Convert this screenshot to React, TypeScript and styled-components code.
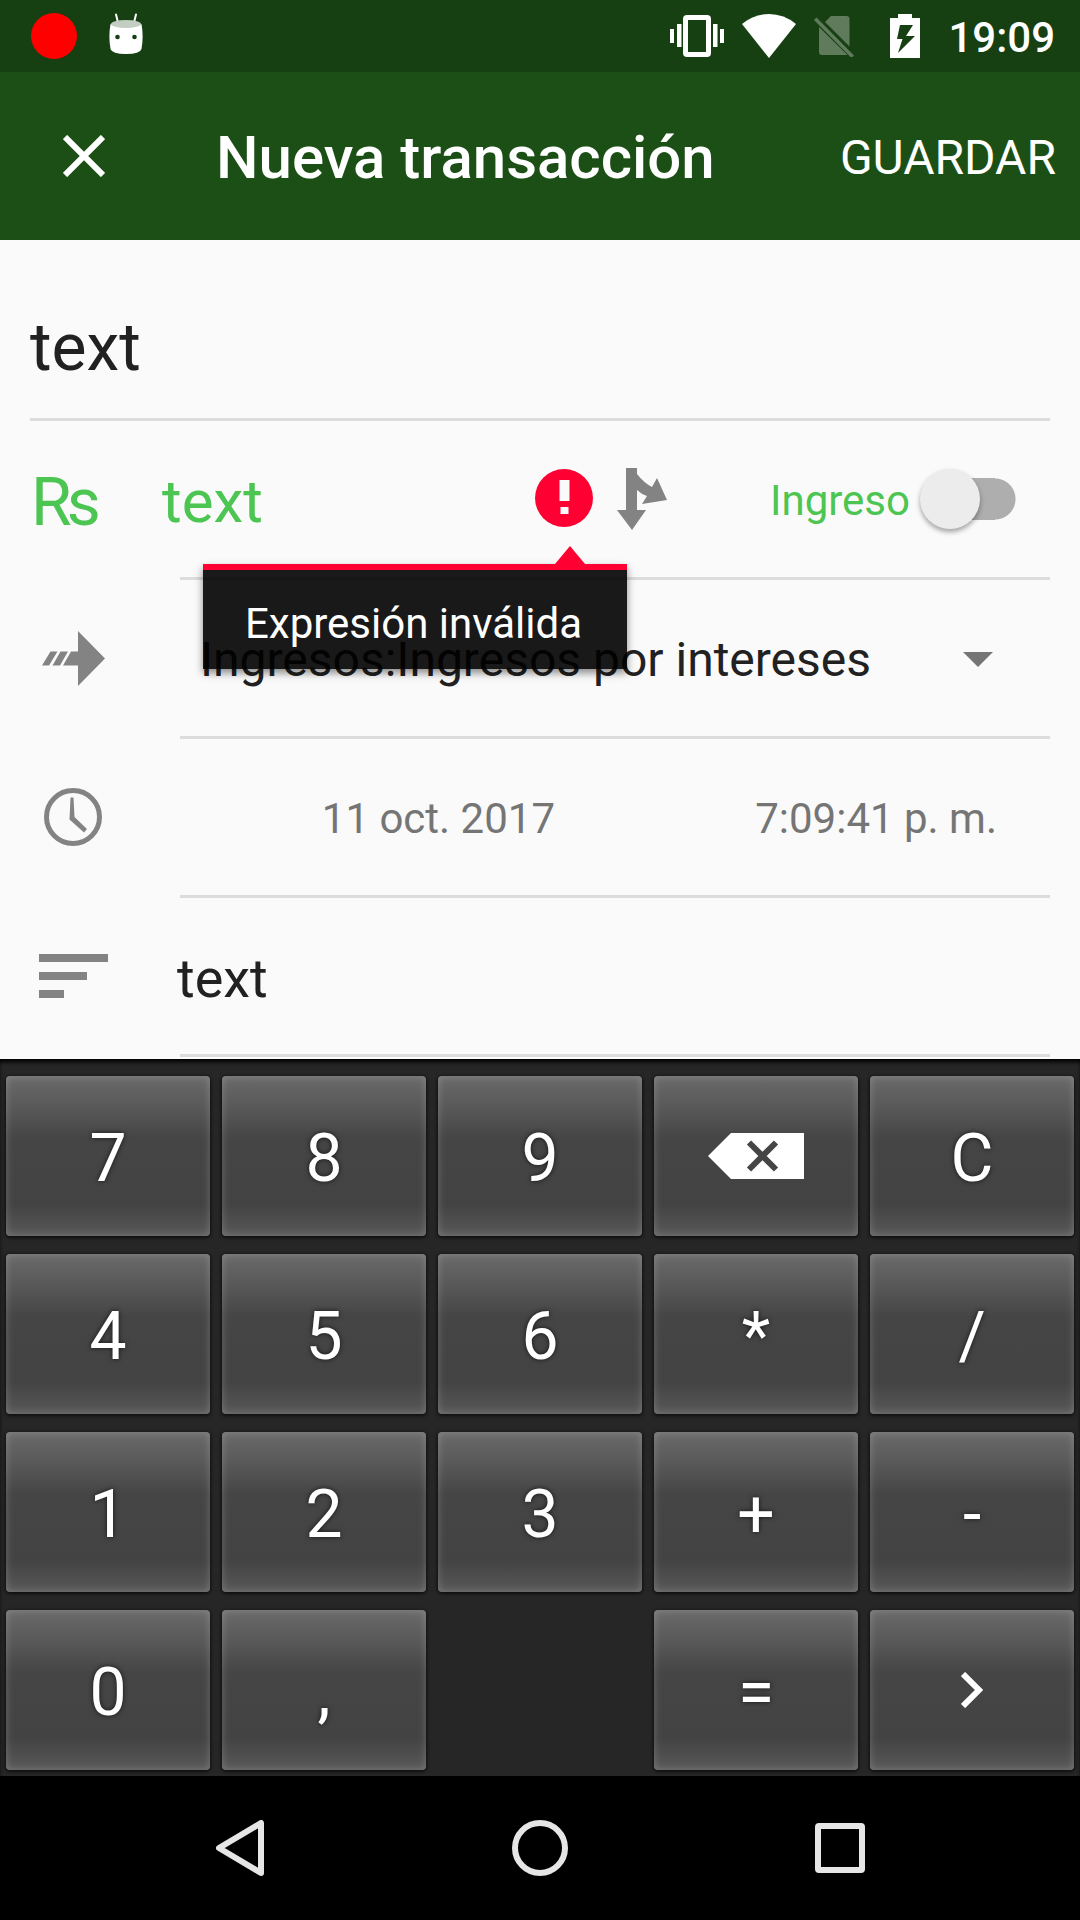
import React from 'react';
import styled, { createGlobalStyle } from 'styled-components';

const GlobalStyle = createGlobalStyle`
  *, *::before, *::after { box-sizing: border-box; }
  body { margin: 0; background: #fafafa; font-family: Roboto, sans-serif; color: #212121; }
  button, input, select { font: inherit; color: inherit; background: none; border: 0; padding: 0; margin: 0; outline: none; }
  button { cursor: pointer; }
  svg { display: block; flex: none; }
`;

const Screen = styled.div`
  display: flex;
  flex-direction: column;
  min-height: 100vh;
`;

const StatusBar = styled.div`
  display: flex;
  align-items: center;
  justify-content: space-between;
  height: 72px;
  padding: 0 25px 0 31px;
  background: #163f12;
  color: #fff;
`;

const StatusGroup = styled.div<{ $gap: number }>`
  display: flex;
  align-items: center;
  gap: ${(p) => p.$gap}px;
`;

const StatusTime = styled.time`
  padding-top: 4px;
  font-size: 42px;
  font-weight: 500;
  line-height: 48px;
`;

const AppBar = styled.header`
  display: flex;
  align-items: center;
  height: 168px;
  padding: 0 24px 0 48px;
  background: #1c4f16;
  color: #fff;
`;

const CloseButton = styled.button`
  display: grid;
  place-items: center;
  width: 72px;
  height: 72px;
`;

const Title = styled.h1`
  flex: 1;
  margin: 0;
  padding: 4px 0 0 96px;
  font-size: 60px;
  font-weight: 500;
  line-height: 72px;
`;

const SaveButton = styled.button`
  padding-top: 4px;
  font-size: 48px;
  line-height: 60px;
`;

const Form = styled.form`
  flex: 1;
  padding: 0 30px;
`;

const Row = styled.div<{ $first?: boolean }>`
  display: flex;
  align-items: center;
  height: ${(p) => (p.$first ? 178 : 156)}px;
  padding-top: ${(p) => (p.$first ? 32 : 0)}px;
`;

const Divider = styled.hr<{ $inset?: boolean }>`
  height: 3px;
  margin: 0 0 0 ${(p) => (p.$inset ? 150 : 0)}px;
  border: 0;
  background: #dcdcdc;
`;

const LeadCell = styled.div<{ $pad: number; $width: number }>`
  flex: none;
  width: ${(p) => p.$width}px;
  padding-left: ${(p) => p.$pad}px;
`;

const CurrencySymbol = styled.span`
  display: block;
  padding-top: 8px;
  font-size: 66px;
  line-height: 78px;
  color: #4cc552;
`;

const TextField = styled.input<{ $size: number; $green?: boolean }>`
  flex: 1;
  min-width: 0;
  height: 100px;
  padding-top: 4px;
  font-size: ${(p) => p.$size}px;
  color: ${(p) => (p.$green ? '#4cc552' : '#212121')};
`;

const ErrorAnchor = styled.div`
  position: relative;
  padding-bottom: 2px;
  margin-right: 24px;
`;

const Tooltip = styled.div`
  position: absolute;
  z-index: 2;
  top: 95px;
  right: -34px;
  padding: 24px 45px 0 42px;
  height: 105px;
  border-top: 6px solid #ff0033;
  background: rgba(0, 0, 0, 0.9);
  background-clip: padding-box;
  box-shadow: 0 4px 8px rgba(0, 0, 0, 0.45);
  color: #fff;
  font-size: 42px;
  line-height: 60px;
  white-space: nowrap;

  &::before {
    content: '';
    position: absolute;
    right: 42px;
    top: -24px;
    border: 15px solid transparent;
    border-top: 0;
    border-bottom: 18px solid #ff0033;
  }
`;

const IconButton = styled.button`
  display: block;
`;

const SwitchLabel = styled.label`
  display: flex;
  align-items: center;
  gap: 10px;
  margin: 0 34px 0 103px;
  font-size: 42px;
  color: #4cc552;

  span { padding-top: 2px; }
`;

const Switch = styled.input`
  appearance: none;
  display: flex;
  align-items: center;
  width: 96px;
  height: 60px;
  background: radial-gradient(circle at 75px 30px, #aeaeae 20px, transparent 21px),
    linear-gradient(#aeaeae, #aeaeae) no-repeat 30px 9px / 45px 42px;

  &::before {
    content: '';
    width: 60px;
    height: 60px;
    border-radius: 50%;
    background: #ececec;
    box-shadow: 0 3px 5px rgba(0, 0, 0, 0.35);
  }

  &:checked { justify-content: flex-end; }
`;

const SelectBox = styled.div`
  position: relative;
  flex: 1;

  svg {
    position: absolute;
    right: 57px;
    top: 44px;
    pointer-events: none;
  }
`;

const Select = styled.select`
  appearance: none;
  width: 100%;
  height: 100px;
  padding: 2px 96px 0 20px;
  font-size: 48px;
`;

const PickerGrid = styled.div`
  display: grid;
  flex: 1;
  grid-template-columns: 1fr 1fr;
`;

const PickerButton = styled.button<{ $end: number }>`
  height: 100px;
  padding: 2px ${(p) => p.$end}px 0 0;
  font-size: 42px;
  text-align: right;
  color: #757575;
`;

const Keypad = styled.div`
  display: grid;
  grid-template-columns: repeat(5, 1fr);
  gap: 18px 12px;
  padding: 17px 6px 6px;
  background: #262626;
  box-shadow: inset 0 4px 4px -1px #000;
`;

const Key = styled.button`
  display: grid;
  place-items: center;
  height: 160px;
  border-radius: 4px;
  background: linear-gradient(#6a6a6a 0%, #585858 20%, #454545 39%, #434343 80%, #585858 100%);
  box-shadow: inset 0 0 8px rgba(255, 255, 255, 0.22), 0 1px 3px 1px #101010;
  color: #fff;
  font-size: 66px;
  line-height: 78px;
  text-shadow: 0 0 5px rgba(0, 0, 0, 0.7);
`;

const KeyText = styled.span`
  padding-top: 6px;
`;

const NavBar = styled.nav`
  display: flex;
  justify-content: center;
  height: 144px;
  background: #000;
`;

const NavButton = styled.button`
  display: grid;
  place-items: center;
  width: 300px;
`;

const DroidIcon = () => (
  <svg width="34" height="46" viewBox="0 0 34 46">
    <path d="M7 1.5l2 8M27 1.5l-2 8" stroke="#fff" strokeWidth="2" strokeLinecap="round" />
    <path d="M1.5 11Q17 17 32.5 11C34 19 34 28 32.5 36Q31 41 17 41T1.5 36C0 28 0 19 1.5 11z" fill="#fff" />
    <ellipse cx="17" cy="11" rx="15" ry="4" fill="#c3cdc1" />
    <circle cx="8.5" cy="24" r="2.3" fill="#163f12" />
    <circle cx="25.5" cy="24" r="2.3" fill="#163f12" />
  </svg>
);

const VibrateIcon = () => (
  <svg width="54" height="42" viewBox="0 0 54 42" fill="#fff">
    <rect x="15.5" y="2.5" width="23" height="37" rx="1.5" fill="none" stroke="#fff" strokeWidth="5" />
    <path d="M0 14h4v14H0zM7 9h4.5v23H7zM43 9h4.5v23H43zM50 14h4v14h-4z" />
  </svg>
);

const WifiIcon = () => (
  <svg width="54" height="44" viewBox="0 0 54 44">
    <path d="M27 44L0 10Q12 0 27 0t27 10z" fill="#fff" />
  </svg>
);

const NoSimIcon = () => (
  <svg width="40" height="42" viewBox="0 -1 40 42" fill="#5f7b5b">
    <path d="M11 6l6-6h15.500q3 0 3 3v27.500zM5 11l28.500 28H8q-3 0-3-3z" />
    <path d="M0 4l2.500-2.500L40 39.500 37.500 42z" />
  </svg>
);

const BatteryIcon = () => (
  <svg width="30" height="44" viewBox="0 0 30 44">
    <path d="M0 4h8V0h14v4h8v40H0z" fill="#fff" />
    <path d="M10 11h13l-7 11h9L8 39l4.500-14H7z" fill="#163f12" />
  </svg>
);

const ErrorIcon = () => (
  <svg width="58" height="58" viewBox="0 0 58 58">
    <circle cx="29" cy="29" r="29" fill="#ff0033" />
    <path d="M24.500 11h10v21h-10zM25.500 38h8v7h-8z" fill="#fafafa" />
  </svg>
);

const SplitIcon = () => (
  <svg width="50" height="62" viewBox="0 0 50 62">
    <path d="M9 0h11v6q7 9 15 13l5-9 10 22-25 4 5-8q-6-2-10-6v20h9L15 62 0 42h9z" fill="#838383" />
  </svg>
);

const TransferIcon = () => (
  <svg width="63" height="55" viewBox="0 0 63 55" fill="#838383">
    <path d="M8.500 20.500h7L7 34.500H0zM18.500 20.500h7.500l-8 14h-7.500zM29 20.500h7V0l27 27.500L36 55V34.500H21z" />
  </svg>
);

const ClockIcon = () => (
  <svg width="58" height="58" viewBox="0 0 58 58" fill="none">
    <circle cx="29" cy="29" r="26.5" stroke="#838383" strokeWidth="5" />
    <path d="M26.500 9.500h3L30.500 29 43 41l-3 3.500L25.500 31.500z" fill="#838383" />
  </svg>
);

const NotesIcon = () => (
  <svg width="69" height="44" viewBox="0 0 69 44">
    <path d="M0 0h69v8H0zM0 18h48v8H0zM0 36h25v8H0z" fill="#838383" />
  </svg>
);

const BackspaceIcon = () => (
  <svg width="96" height="46" viewBox="0 0 96 46">
    <path d="M23 0h73v46H23L0 23z" fill="#fff" />
    <path d="M41 9.500l27 27M68 9.500l-27 27" stroke="#454545" strokeWidth="6" />
  </svg>
);

const ChevronIcon = () => (
  <svg width="22" height="36" viewBox="0 0 22 36">
    <path d="M2 2l16 16L2 34" fill="none" stroke="#fff" strokeWidth="6" />
  </svg>
);

type KeyDef = { id: string; face?: React.ReactNode } | null;

const keys: KeyDef[] = [
  { id: '7' }, { id: '8' }, { id: '9' }, { id: 'Borrar', face: <BackspaceIcon /> }, { id: 'C' },
  { id: '4' }, { id: '5' }, { id: '6' }, { id: '*' }, { id: '/' },
  { id: '1' }, { id: '2' }, { id: '3' }, { id: '+' }, { id: '-' },
  { id: '0' }, { id: ',' }, null, { id: '=' }, { id: 'Siguiente', face: <ChevronIcon /> },
];

export default function App() {
  return (
    <Screen>
      <GlobalStyle />
      <StatusBar>
        <StatusGroup $gap={32}>
          <svg width="46" height="46" viewBox="0 0 46 46"><circle cx="23" cy="23" r="23" fill="#f00" /></svg>
          <DroidIcon />
        </StatusGroup>
        <StatusGroup $gap={36}>
          <StatusGroup $gap={18}>
            <VibrateIcon />
            <WifiIcon />
            <NoSimIcon />
          </StatusGroup>
          <StatusGroup $gap={28}>
            <BatteryIcon />
            <StatusTime>19:09</StatusTime>
          </StatusGroup>
        </StatusGroup>
      </StatusBar>

      <AppBar>
        <CloseButton aria-label="Cerrar">
          <svg width="42" height="42" viewBox="0 0 42 42">
            <path d="M2 2l38 38M40 2L2 40" stroke="#fff" strokeWidth="6" />
          </svg>
        </CloseButton>
        <Title>Nueva transacción</Title>
        <SaveButton type="submit" form="transaction">GUARDAR</SaveButton>
      </AppBar>

      <Form id="transaction" onSubmit={(e) => e.preventDefault()}>
        <Row $first>
          <TextField $size={66} aria-label="Descripción" defaultValue="text" />
        </Row>
        <Divider />

        <Row>
          <LeadCell $width={132} $pad={1}>
            <CurrencySymbol>₨</CurrencySymbol>
          </LeadCell>
          <TextField $size={60} $green aria-label="Importe" defaultValue="text" />
          <ErrorAnchor>
            <ErrorIcon />
            <Tooltip role="alert">Expresión inválida</Tooltip>
          </ErrorAnchor>
          <IconButton type="button" aria-label="Dividir"><SplitIcon /></IconButton>
          <SwitchLabel>
            <span>Ingreso</span>
            <Switch type="checkbox" role="switch" />
          </SwitchLabel>
        </Row>
        <Divider $inset />

        <Row>
          <LeadCell $width={150} $pad={12}><TransferIcon /></LeadCell>
          <SelectBox>
            <Select aria-label="Cuenta">
              <option>Ingresos:Ingresos por intereses</option>
            </Select>
            <svg width="30" height="15" viewBox="0 0 30 15"><path d="M0 0h30L15 15z" fill="#757575" /></svg>
          </SelectBox>
        </Row>
        <Divider $inset />

        <Row>
          <LeadCell $width={150} $pad={14}><ClockIcon /></LeadCell>
          <PickerGrid>
            <PickerButton type="button" $end={60}>11 oct. 2017</PickerButton>
            <PickerButton type="button" $end={53}>7:09:41 p. m.</PickerButton>
          </PickerGrid>
        </Row>
        <Divider $inset />

        <Row>
          <LeadCell $width={147} $pad={9}><NotesIcon /></LeadCell>
          <TextField $size={54} aria-label="Notas" defaultValue="text" />
        </Row>
        <Divider $inset />
      </Form>

      <Keypad>
        {keys.map((key, i) =>
          key ? (
            <Key key={key.id} type="button" aria-label={key.face ? key.id : undefined}>
              {key.face ?? <KeyText>{key.id}</KeyText>}
            </Key>
          ) : (
            <span key={i} />
          ),
        )}
      </Keypad>

      <NavBar>
        <NavButton aria-label="Atrás">
          <svg width="48" height="56" viewBox="0 0 48 56">
            <path d="M45 3v50L3 28z" fill="none" stroke="#e6e6e6" strokeWidth="6" strokeLinejoin="round" />
          </svg>
        </NavButton>
        <NavButton aria-label="Inicio">
          <svg width="56" height="56" viewBox="0 0 56 56">
            <circle cx="28" cy="28" r="25" fill="none" stroke="#e6e6e6" strokeWidth="6" />
          </svg>
        </NavButton>
        <NavButton aria-label="Recientes">
          <svg width="50" height="50" viewBox="0 0 50 50">
            <rect x="3" y="3" width="44" height="44" rx="1" fill="none" stroke="#e6e6e6" strokeWidth="6" />
          </svg>
        </NavButton>
      </NavBar>
    </Screen>
  );
}
